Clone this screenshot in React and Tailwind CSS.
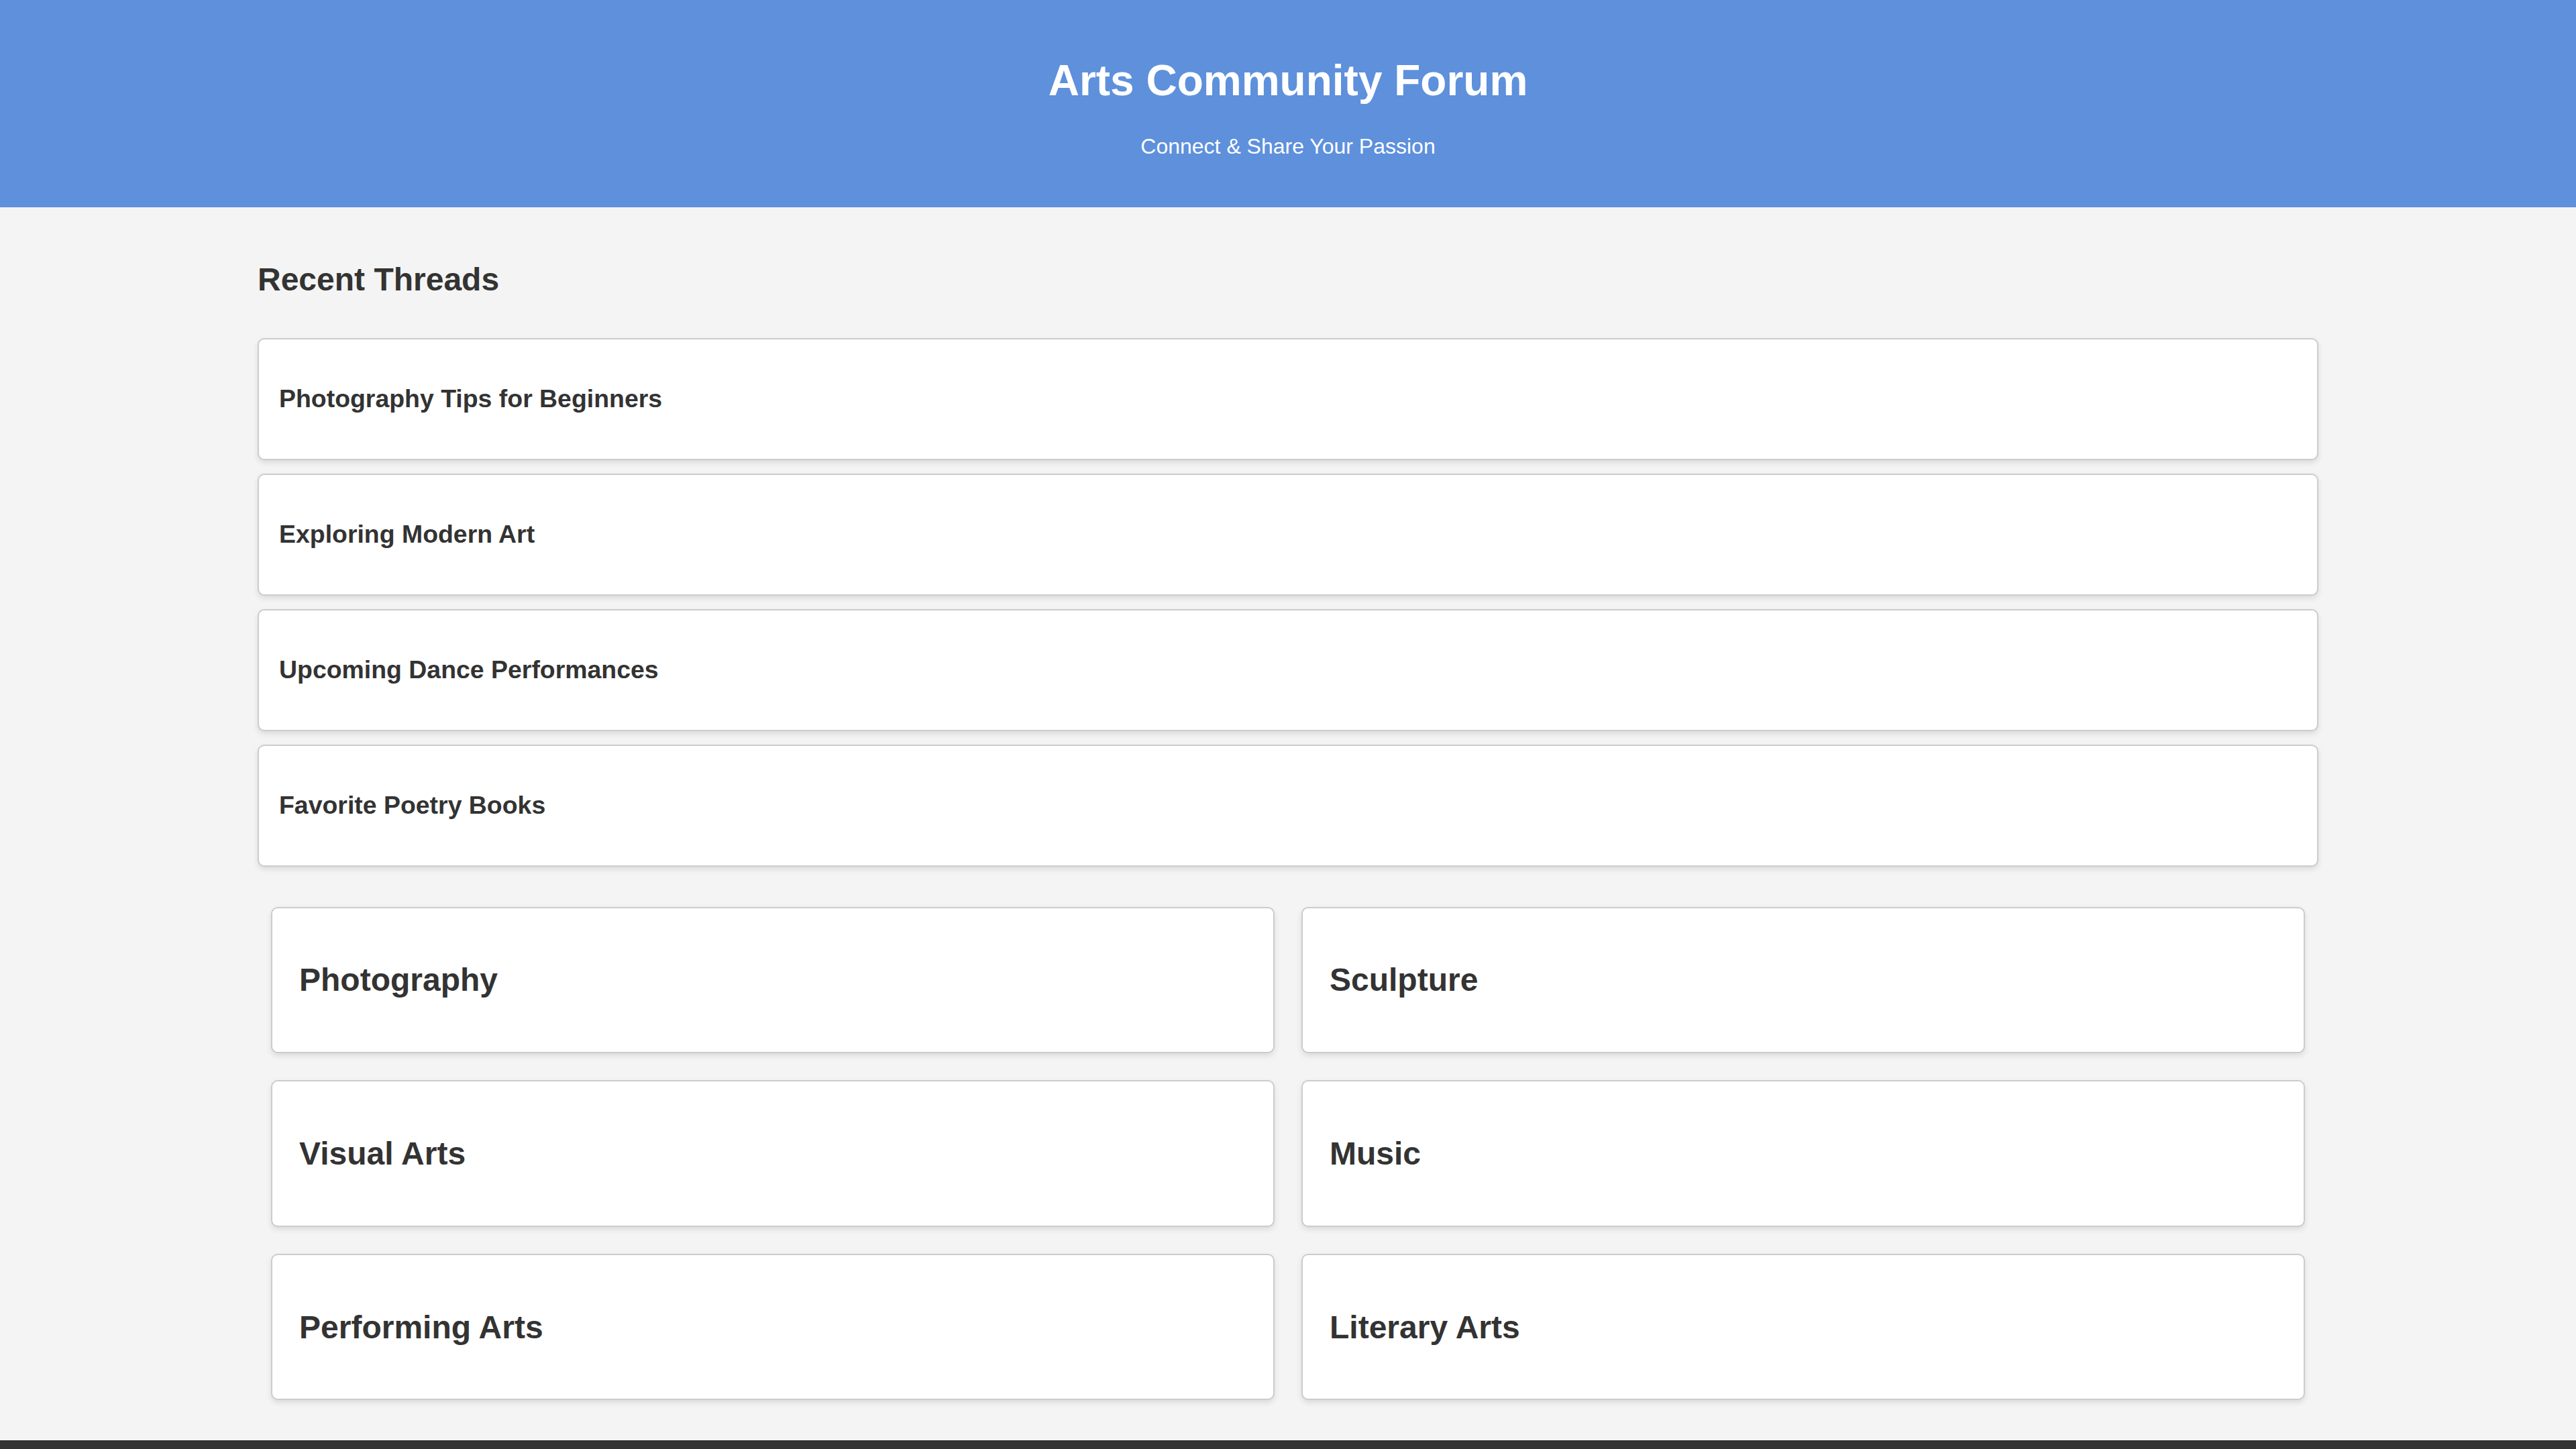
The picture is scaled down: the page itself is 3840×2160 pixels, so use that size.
import React from 'react';

const threads = [
    'Photography Tips for Beginners',
    'Exploring Modern Art',
    'Upcoming Dance Performances',
    'Favorite Poetry Books',
];

const categories = [
    'Photography',
    'Sculpture',
    'Visual Arts',
    'Music',
    'Performing Arts',
    'Literary Arts',
];

const cardBase = 'bg-white border-2 border-[#cccccc] rounded-[10px] shadow-[0_4px_8px_rgba(0,0,0,0.1)]';

const App = () => {
    return (
        <div className="min-h-screen bg-[#f4f4f4] text-[#333333] font-['Liberation_Sans',Arial,sans-serif]">
            <header className="bg-[#5e90dc] text-white text-center p-[40px]">
                <h1 className="text-[64px] font-bold leading-[normal] my-[43px]">Arts Community Forum</h1>
                <p className="text-[32px] leading-[normal] my-[32px]">Connect &amp; Share Your Passion</p>
            </header>

            <main className="w-[80%] mx-auto py-[40px]">
                <h2 className="text-[48px] font-bold leading-[normal] my-[40px]">Recent Threads</h2>

                <div className="flex flex-col gap-[20px] py-[20px]">
                    {threads.map((title) => (
                        <div key={title} className={`${cardBase} px-[30px] py-[30px]`}>
                            <h3 className="text-[37.44px] font-bold leading-[normal] my-[37.44px]">{title}</h3>
                        </div>
                    ))}
                </div>

                <div className="grid grid-cols-2 gap-[40px] p-[20px] mt-[20px]">
                    {categories.map((name) => (
                        <div key={name} className={`${cardBase} p-[40px]`}>
                            <h2 className="text-[48px] font-bold leading-[normal] my-[39.84px]">{name}</h2>
                        </div>
                    ))}
                </div>
            </main>

            <footer className="bg-[#333333] text-white text-center p-[40px]">
                <p className="text-[32px] leading-[normal]">&copy; 2024 Arts Community Forum. All rights reserved.</p>
            </footer>
        </div>
    );
};

export default App;
